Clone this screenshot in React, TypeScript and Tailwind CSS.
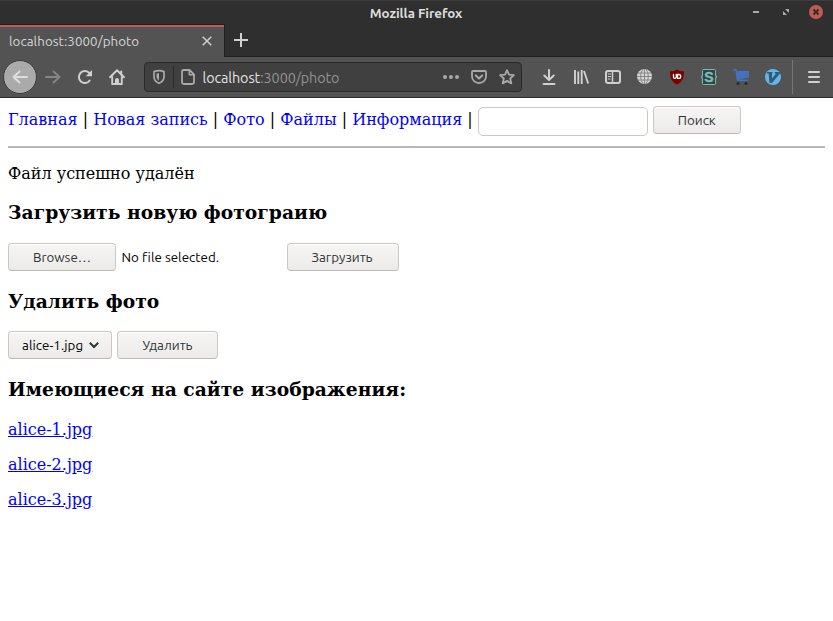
import type { ReactNode } from "react";

const UI = "font-['Ubuntu','Noto_Sans',sans-serif]";

function Icon({ children, className = "" }: { children: ReactNode; className?: string }) {
  return (
    <svg
      viewBox="0 0 16 16"
      className={`block h-4 w-4 shrink-0 ${className}`}
      fill="none"
      stroke="currentColor"
      strokeWidth="2"
      strokeLinecap="round"
      strokeLinejoin="round"
    >
      {children}
    </svg>
  );
}

function TitleBar() {
  return (
    <div className="relative flex h-6 shrink-0 items-center justify-center border-t border-[#3c3c3c]">
      <span className="mt-[3px] -ml-px text-[13.33px] leading-4 font-bold tracking-[-0.06px] text-[#dcdcdc]">Mozilla Firefox</span>
      <div className="absolute top-[4px] right-[10px] flex items-center text-[#a9a9a9]">
        <svg viewBox="0 0 6 2" className="mr-[24px] block h-[2px] w-[6px]">
          <path d="M0 0h6v2H0z" fill="currentColor" />
        </svg>
        <svg viewBox="0 0 6 6" className="mr-[20px] block h-[6px] w-[6px]">
          <path d="M2 0h4v4zM0 2l4 4H0z" fill="currentColor" />
        </svg>
        <svg viewBox="0 0 14 14" className="block h-[14px] w-[14px]">
          <circle cx="7" cy="7" r="7" fill="#bf5a54" />
          <path d="M4.5 4.5l5 5m0-5l-5 5" stroke="#2d2d2d" strokeWidth="1.8" />
        </svg>
      </div>
    </div>
  );
}

function TabBar() {
  return (
    <div className="flex h-[33px] shrink-0">
      <div className="flex w-[225px] shrink-0 items-center border-t border-r border-[#202020] bg-[#535353]">
        <div className="flex h-full w-full items-center justify-between border-t-2 border-[#bf5a54] pr-3 pl-[9px]">
          <span className="text-[13.33px] leading-4 tracking-[0.08px] whitespace-nowrap text-[#d6d6d6]">localhost:3000/photo</span>
          <svg viewBox="0 0 10 10" className="mb-[2px] block h-[10px] w-[10px] text-[#d0d0d0]">
            <path d="M.7.7l8.6 8.6M9.3.7L.7 9.3" stroke="currentColor" strokeWidth="1.5" />
          </svg>
        </div>
      </div>
      <div className="flex flex-1 items-center border-b border-[#202020] pl-[9px] text-[#d0d0d0]">
        <svg viewBox="0 0 14 14" className="block h-[14px] w-[14px]">
          <path d="M7 0v14M0 7h14" stroke="currentColor" strokeWidth="2" />
        </svg>
      </div>
    </div>
  );
}

function AddressBar() {
  return (
    <div className="ml-[19px] flex h-[30px] w-[378px] shrink-0 items-center rounded-[4px] border border-[#2a2a2a] bg-[#404040] pl-[6px] text-[#a9a9a9]">
      <Icon>
        <path d="M8 1.6c1.7 0 3.5.4 5 1v4.8c0 3.2-2 5.6-5 6.9-3-1.3-5-3.7-5-6.9V2.6c1.5-.6 3.3-1 5-1z" strokeWidth="1.7" />
        <path d="M8 4.3v7.4C6.4 10.600 5.500 9.200 5.500 7.300V4.700C6.300 4.400 7.100 4.300 8 4.300z" fill="currentColor" stroke="none" />
      </Icon>
      <div className="ml-[6px] h-[22px] w-px bg-[#2a2a2a]" />
      <Icon className="ml-[6px]">
        <path d="M3.700 1H9.500L14 5.500V13.200A1.800 1.800 0 0 1 12.200 15H3.800A1.800 1.800 0 0 1 2 13.200V2.800A1.800 1.800 0 0 1 3.700 1z" strokeWidth="1.8" />
        <path d="M9.300 1.500V5.800H13.500" strokeWidth="1.500" />
      </Icon>
      <span className="mt-[2px] ml-[6.5px] text-[14.4px] leading-5 tracking-[-0.1px] whitespace-nowrap text-[#929292]">
        <span className="text-[#e2e2e2]">localhost</span>:3000/photo
      </span>
      <div className="ml-auto flex items-center gap-3 pr-[6px]">
        <Icon>
          <g fill="currentColor" stroke="none">
            <circle cx="2" cy="8" r="2" />
            <circle cx="8" cy="8" r="2" />
            <circle cx="14" cy="8" r="2" />
          </g>
        </Icon>
        <Icon>
          <path d="M2 2h12q1 0 1 1v4.500a7 6.500 0 0 1-14 0V3q0-1 1-1z" strokeWidth="1.800" />
          <path d="M4.800 6.500L8 9.500l3.200-3" />
        </Icon>
        <Icon>
          <path d="M8 1.200l2 4.500 4.900.5-3.700 3.300 1.100 4.900L8 11.900l-4.300 2.500 1.100-4.900L1.100 6.200 6 5.700z" strokeWidth="1.800" />
        </Icon>
      </div>
    </div>
  );
}

function Extensions() {
  return (
    <div className="ml-[19px] flex items-center gap-4 text-[#d0d0d0]">
      <Icon>
        <path d="M8 1v9.500M3.300 6.500L8 11l4.700-4.500M2.500 15h11" />
      </Icon>
      <Icon>
        <path d="M2 1v14M5.300 2.500V15M8.700 1v14M11 2L15.200 14.500" strokeWidth="1.900" strokeLinecap="butt" />
      </Icon>
      <Icon>
        <rect x="1" y="2" width="14" height="12" rx="2" />
        <path d="M7.500 2v12" strokeWidth="1.500" />
        <path d="M3.300 5h2.200M3.300 7.500h2.200M3.300 10h1.700" strokeWidth="1" />
      </Icon>
      <Icon>
        <circle cx="7.500" cy="7.500" r="7.500" fill="#d6d6d6" stroke="none" />
        <path d="M0 7.500h15M1 4h13M1 11h13M7.500 0v15M6 0Q1 7.500 6 15M9 0Q14 7.500 9 15" stroke="#777" strokeWidth=".8" />
      </Icon>
      <Icon>
        <path d="M8 .5c2 1.300 4.300 1.800 7 1.800 0 6.700-1.200 10.500-7 13.200C2.200 12.800 1 9 1 2.300 3.700 2.300 6 1.800 8 .5z" fill="#800000" stroke="none" />
        <path d="M4.500 5.500v2.500q0 1.300 1.300 1.300T7.300 8V5.500M8.500 5.500h1.300a1.900 1.900 0 0 1 0 3.800H8.500z" stroke="#fff" strokeWidth="1.300" />
      </Icon>
      <Icon>
        <rect x="1.500" y=".5" width="13" height="15" rx="1" fill="#244a49" stroke="#89b3ae" strokeWidth="1" />
        <path d="M1.500 6L.3 8l1.200 2M14.500 6l1.200 2-1.200 2" fill="#244a49" stroke="#89b3ae" strokeWidth="1" />
        <text x="8" y="13" textAnchor="middle" fill="#8db8b2" stroke="#8db8b2" strokeWidth=".4" fontFamily="Liberation Sans" fontWeight="bold" fontSize="14">S</text>
      </Icon>
      <Icon>
        <path d="M0 0h3.300l.9 2H16v6.500l-10.500 2H15V12H4.300l-.8-2L2.400 1.500H0z" fill="#4671bd" stroke="none" />
        <circle cx="5" cy="14.500" r="1.500" fill="#292929" stroke="none" />
        <circle cx="13" cy="14.500" r="1.500" fill="#292929" stroke="none" />
      </Icon>
      <Icon>
        <circle cx="8" cy="8" r="8" fill="#67b4ea" stroke="none" />
        <path d="M2 3h5.500v1.400H7v5.100l4-5.100H9.700V3H15v1.400L7 14H4.500L3.600 4.400H2z" fill="#315b7b" stroke="none" />
      </Icon>
    </div>
  );
}

function Toolbar() {
  return (
    <div className="flex h-[41px] shrink-0 items-center border-b border-[#292929] bg-[#535353] pl-[3px] text-[#d0d0d0]">
      <div className="flex h-[34px] w-[34px] shrink-0 items-center justify-center rounded-full border border-[#3b3b3b] bg-[#aaa] text-[#dedede]">
        <Icon>
          <path d="M15 8H1.500M7.500 2.500L1.500 8l6 5.500" />
        </Icon>
      </div>
      <Icon className="ml-2 text-[#858585]">
        <path d="M1 8h13.500M8.500 2.500l6 5.500-6 5.500" />
      </Icon>
      <Icon className="ml-4">
        <path d="M12.700 11.500A6 6 0 1 1 12.500 4.200" />
        <path d="M15 1v6.200H8.800z" fill="currentColor" stroke="none" />
      </Icon>
      <Icon className="ml-4">
        <path d="M1 8.200L8 1.300l7 6.900M3.200 8v7h9.600V8" strokeWidth="1.900" />
        <path d="M6 15v-4a2 2 0 0 1 4 0v4z" fill="currentColor" stroke="none" />
        <path d="M12.200 2.500v3" />
      </Icon>
      <AddressBar />
      <Extensions />
      <div className="ml-[11px] h-[34px] w-px bg-[#777]" />
      <Icon className="ml-[13px]">
        <path d="M3 3h10M3 8h10M3 13h10" />
      </Icon>
    </div>
  );
}

function Button({ children, className }: { children: ReactNode; className: string }) {
  return (
    <button
      className={`${UI} h-7 shrink-0 rounded-[4px] border border-[#cdc7c2] border-b-[#bfb8b1] bg-linear-to-b from-[#f6f5f4] to-[#edebe9] pt-[2px] text-[13.33px] leading-[24px] whitespace-nowrap shadow-[inset_0_1px_#fff] ${className}`}
    >
      {children}
    </button>
  );
}

const navigation = ["Главная", "Новая запись", "Фото", "Файлы", "Информация"];
const photos = ["alice-1.jpg", "alice-2.jpg", "alice-3.jpg"];

function Heading({ children, className = "my-[19px]" }: { children: ReactNode; className?: string }) {
  return <h3 className={`h-[22px] text-[18.72px] leading-[22px] font-bold tracking-[0.02px] ${className}`}>{children}</h3>;
}

export default function App() {
  return (
    <div className="flex h-[621px] w-[833px] flex-col overflow-hidden bg-white">
      <header className={`${UI} flex shrink-0 flex-col bg-[#2f2f2f]`}>
        <TitleBar />
        <TabBar />
        <Toolbar />
      </header>
      <main className="flex-1 px-2 font-['DejaVu_Serif',serif] text-base leading-[19px] text-black">
        <nav className="flex h-12 items-start pt-2">
          <div className="mt-1 mr-[5px] whitespace-nowrap">
            {navigation.map((item) => (
              <span key={item}>
                <a href="#" className="text-[#0000ff]">{item}</a>
                {" | "}
              </span>
            ))}
          </div>
          <input aria-label="Поиск" className="mt-px mr-[5px] h-[29px] w-[170px] shrink-0 rounded-[5px] border border-[#cdc7c2] bg-white px-2" />
          <Button className="w-[88px] text-[#2e3436]">Поиск</Button>
        </nav>
        <hr className="h-[2px] border-0 bg-[#b8b8b8]" />
        <p className="mt-4">Файл успешно удалён</p>
        <Heading className="mt-[18px] mb-[20px]">Загрузить новую фотограию</Heading>
        <div className="flex h-7 items-center">
          <Button className="w-[108px] text-[#2e3436]">Browse…</Button>
          <span className={`${UI} ml-[5.5px] w-[165.5px] text-[13.33px] tracking-[0.04px] whitespace-nowrap`}>No file selected.</span>
          <Button className="w-[112px] pr-[2px] text-[#2e3436]">Загрузить</Button>
        </div>
        <Heading>Удалить фото</Heading>
        <div className="flex h-7 gap-[5px]">
          <Button className="flex w-[104px] items-center pl-[13px] text-black">
            <span className="w-[62px] text-left tracking-[0.06px]">alice-1.jpg</span>
            <svg viewBox="0 0 10 7" className="mb-[2px] ml-[5px] block h-[7px] w-[10px]">
              <path d="M.8.8L5 5l4.200-4.200" fill="none" stroke="#2e3436" strokeWidth="2" />
            </svg>
          </Button>
          <Button className="w-[101px] text-[#2e3436]">Удалить</Button>
        </div>
        <Heading>Имеющиеся на сайте изображения:</Heading>
        <ul className="flex flex-col gap-4 pt-px">
          {photos.map((photo) => (
            <li key={photo}>
              <a href="#" className="text-[#0000ff] underline">{photo}</a>
            </li>
          ))}
        </ul>
      </main>
    </div>
  );
}
